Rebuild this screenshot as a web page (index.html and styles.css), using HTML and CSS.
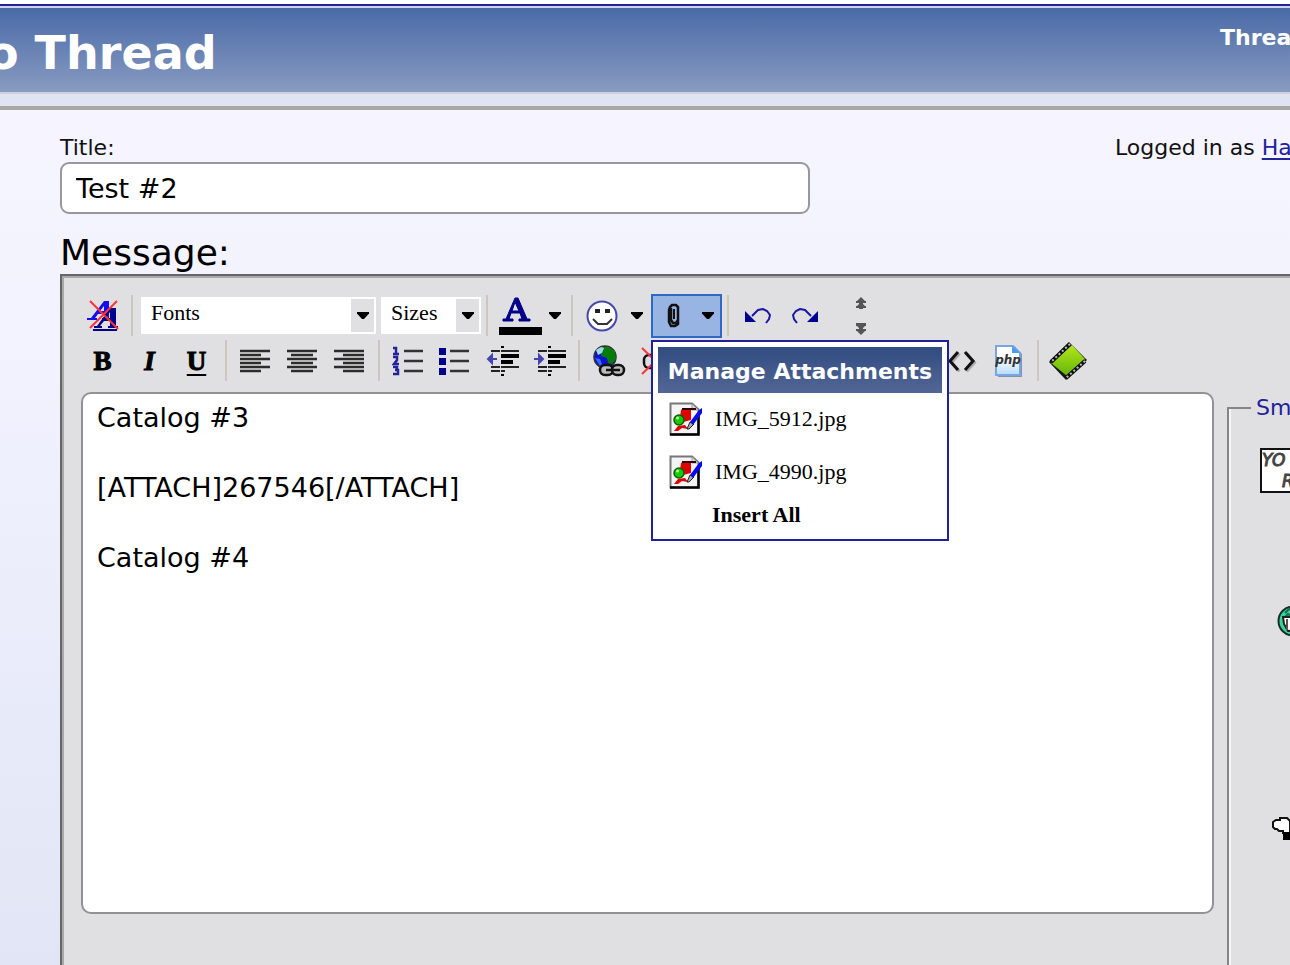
FILE: index.html
```html
<!DOCTYPE html>
<html lang="en">
<head>
<meta charset="utf-8">
<title>Thread</title>
<link rel="stylesheet" href="styles.css">
</head>
<body>
<svg class="defs" aria-hidden="true">
  <symbol id="caret" viewBox="0 0 12 7"><path d="M0 0h12v1.500L7 7H5L0 1.500z"/></symbol>
  <symbol id="picture" viewBox="0 0 34 34">
    <path d="M1.500 1.500H23l6.500 6v25h-28z" fill="#f4f4f4" stroke="#777" stroke-width="2"/>
    <path d="M1 32.500h28.500V12" fill="none" stroke="#000" stroke-width="2.500"/>
    <path d="M23 2v6h6" fill="#ddd" stroke="#999"/>
    <path d="M12 8l3-2h7v12l-8 2-3-5z" fill="#e00000"/><path d="M13 7h14" stroke="#300" stroke-width="2"/>
    <path d="M5 29l4-5 7-1 3 4-6-1-4 3z" fill="#e00000"/>
    <circle cx="10" cy="18" r="5" fill="#18c800" stroke="#056000" stroke-width="1.500"/><circle cx="8.500" cy="16" r="1.500" fill="#bff7a0"/>
    <path d="M18 27l3-7 4 2-5 5z" fill="#aaa" stroke="#222"/><path d="M21 20L30 8l3-2v5l-9 12z" fill="#0808f0"/>
  </symbol>
</svg>

<header class="banner">
  <h1>o Thread</h1>
  <span class="banner-tools">Threa</span>
</header>
<div class="strip"></div>

<main class="page">
  <div class="title-row">
    <div class="title-field">
      <label for="title">Title:</label>
      <input id="title" type="text" value="Test #2">
    </div>
    <p class="login">Logged in as <a href="#">Ha</a></p>
  </div>
  <label class="message-label" for="message">Message:</label>

  <section class="editor">
    <div class="toolbar">
      <div class="tools">
        <button class="tool" aria-label="Remove formatting"><svg width="34" height="32" viewBox="0 0 34 32"><path d="M1 18h4L18 1h5v17h2v2H16v-2h2v-4h-6l-3 4h2v2H1zm13-7h4V6z" fill="#1010f0"/><path d="M8 26h3L24 8h6v18h2v2H22v-2h2v-5h-6l-4 5h2v2H8zm12-8h4v-6zM7 29h24v2H7z" fill="#00008c"/><path d="M4 1l28 28M31 1L4 28" stroke="#f33" stroke-width="2"/></svg></button>
        <span class="sep"></span>
        <span class="picker fonts"><select aria-label="Fonts"><option>Fonts</option></select><span class="arrow"><svg class="caret"><use href="#caret"/></svg></span></span>
        <span class="picker sizes"><select aria-label="Sizes"><option>Sizes</option></select><span class="arrow"><svg class="caret"><use href="#caret"/></svg></span></span>
        <span class="sep"></span>
        <button class="tool menu" aria-label="Text colour"><svg width="44" height="38" viewBox="0 0 44 38"><path d="M5 22h3L17 1h3l9 21h3v2H21v-2h3l-2-6h-9l-2 6h4v2H5zm9-8h7l-4-9z" fill="#00008b" stroke="#00008b"/><path d="M1 30h43v8H1z"/></svg><svg class="caret"><use href="#caret"/></svg></button>
        <span class="sep"></span>
        <button class="tool menu smile" aria-label="Smilies"><svg width="32" height="32" viewBox="0 0 32 32"><circle cx="16" cy="16" r="14.500" fill="#fff" stroke="#4646ac" stroke-width="2"/><path d="M9 9h5v4H9zM19 9h5v4h-5z" fill="#222"/><path d="M7 19l5 5h9l5-5" fill="none" stroke="#333" stroke-width="2"/></svg><svg class="caret"><use href="#caret"/></svg></button>
        <div class="attach">
          <button class="tool menu open" aria-label="Attachments" aria-expanded="true"><svg width="34" height="26" viewBox="0 0 34 26"><path d="M12 5v12l2 3h3l2-3V4l-2-2h-4l-2 2-1 3v12l2 4h4l3-2V7" fill="none" stroke="#111" stroke-width="2.500"/><path d="M15 6v10" stroke="#111" stroke-width="2"/></svg><svg class="caret"><use href="#caret"/></svg></button>
          <div class="popup">
            <h2>Manage Attachments</h2>
            <button class="item"><svg width="34" height="34"><use href="#picture"/></svg>IMG_5912.jpg</button>
            <button class="item"><svg width="34" height="34"><use href="#picture"/></svg>IMG_4990.jpg</button>
            <button class="item all">Insert All</button>
          </div>
        </div>
        <span class="sep"></span>
        <button class="tool" aria-label="Undo"><svg width="26" height="16" viewBox="0 0 26 16"><path d="M0 3l11 11H0z" fill="#000090"/><path d="M7 8l6-6 5-1 4 2 3 4-1 4-3 4" fill="none" stroke="#1818a0" stroke-width="2"/></svg></button>
        <button class="tool" aria-label="Redo"><svg width="26" height="16" viewBox="0 0 26 16"><path d="M26 3L15 14h11z" fill="#000090"/><path d="M19 8l-6-6-5-1-4 2-3 4 1 4 3 4" fill="none" stroke="#1818a0" stroke-width="2"/></svg></button>
        <span class="resize">
          <button aria-label="Decrease size"><svg width="12" height="13" viewBox="0 0 12 13"><path d="M6 0l5 5H8v2l3 3H8v2H4v-2H1l3-3V5H1zM1 4h10v2H1zM1 9h10v2H1z" fill="#555"/></svg></button>
          <button aria-label="Increase size"><svg width="12" height="13" viewBox="0 0 12 13"><path d="M6 13l5-5H8V6l3-3H8V1H4v2H1l3 3v2H1zM1 9h10V7H1zM1 4h10V1H1z" fill="#555"/></svg></button>
        </span>
      </div>
      <div class="tools">
        <button class="tool letter" aria-label="Bold">B</button>
        <button class="tool letter slant" aria-label="Italic">I</button>
        <button class="tool letter line" aria-label="Underline">U</button>
        <span class="sep"></span>
        <button class="tool" aria-label="Align left"><svg width="32" height="24" viewBox="0 0 32 24"><path d="M0 2h30M0 6h21M0 10h30M0 14h21M0 18h30M0 22h21" stroke="#2c2c2c" stroke-width="2.500"/></svg></button>
        <button class="tool" aria-label="Align centre"><svg width="32" height="24" viewBox="0 0 32 24"><path d="M0 2h30M4 6h22M0 10h30M4 14h22M0 18h30M4 22h22" stroke="#2c2c2c" stroke-width="2.500"/></svg></button>
        <button class="tool" aria-label="Align right"><svg width="32" height="24" viewBox="0 0 32 24"><path d="M0 2h30M9 6h21M0 10h30M9 14h21M0 18h30M9 22h21" stroke="#2c2c2c" stroke-width="2.500"/></svg></button>
        <span class="sep"></span>
        <button class="tool" aria-label="Numbered list"><svg width="34" height="30" viewBox="0 0 34 30"><path d="M12 5h19M12 15h19M12 25h19" stroke="#333" stroke-width="2.500"/><path d="M1 2h3v6M1 8h6M1 11h4v3l-3 4h5M1 21h4v3H3h3v4H1" fill="none" stroke="#22229a" stroke-width="2.500"/></svg></button>
        <button class="tool" aria-label="Bulleted list"><svg width="34" height="28" viewBox="0 0 34 28"><path d="M11 4h19M11 14h19M11 24h19" stroke="#333" stroke-width="2.500"/><path d="M0 1h7v7H0zM0 11h7v7H0zM0 21h7v7H0z" fill="#00008b"/></svg></button>
        <button class="tool" aria-label="Outdent"><svg width="34" height="32" viewBox="0 0 34 32"><path d="M5 6h9M15 6h18M5 22h9M15 22h18M5 26h9M15 26h4" stroke="#222" stroke-width="2"/><path d="M15 9h18v4H15zM15 15h12v4H15zM15 1h3v2h-3zM15 29h3v2h-3z"/><path d="M11 14H3M6 10l-4 4 4 4z" fill="#4444b0" stroke="#4444b0" stroke-width="2"/></svg></button>
        <button class="tool" aria-label="Indent"><svg width="34" height="32" viewBox="0 0 34 32"><path d="M5 6h9M15 6h18M5 22h9M15 22h18M5 26h9M15 26h4" stroke="#222" stroke-width="2"/><path d="M15 9h18v4H15zM15 15h12v4H15zM15 1h3v2h-3zM15 29h3v2h-3z"/><path d="M1 14h6M6 10l4 4-4 4z" fill="#4444b0" stroke="#4444b0" stroke-width="2"/></svg></button>
        <span class="sep"></span>
        <button class="tool" aria-label="Insert link"><svg width="34" height="34" viewBox="0 0 34 34"><circle cx="13" cy="13" r="11" fill="#0a14d0" stroke="#333" stroke-width="1.500"/><path d="M9 3h8l6 4 1 8-4 5-4-1-1-5-6-2 1-4z" fill="#087c08"/><path d="M4 6l5-3 3 1-2 5-4 2z" fill="#9fd8e8"/><path d="M3 14l5 1 2 5-2 2z" fill="#3b66ff"/><g fill="#bbb" stroke="#111" stroke-width="2.500"><rect x="8" y="21" width="13" height="10" rx="5"/><rect x="20" y="21" width="12" height="10" rx="5"/><path d="M14 26h14"/></g></svg></button>
        <button class="tool" aria-label="Remove link"><svg width="34" height="30" viewBox="0 0 34 30"><rect x="5" y="9" width="12" height="13" rx="5" fill="#ddd" stroke="#111" stroke-width="2.500"/><path d="M3 2l27 26M30 2L3 28" stroke="#f33" stroke-width="2"/></svg></button>
        <span class="covered"></span>
        <button class="tool" aria-label="HTML"><svg width="30" height="22" viewBox="0 0 30 22"><path d="M11 2L3 11l8 9M18 2l8 9-8 9" transform="translate(1.500 1.500)" fill="none" stroke="#aaa" stroke-width="3"/><path d="M11 2L3 11l8 9M18 2l8 9-8 9" fill="none" stroke="#111" stroke-width="3"/></svg></button>
        <button class="tool" aria-label="PHP"><svg width="30" height="34" viewBox="0 0 30 34"><defs><linearGradient id="sheet" x2="0" y2="1"><stop offset=".4" stop-color="#fff"/><stop offset="1" stop-color="#b4dcff"/></linearGradient></defs><path d="M4 3h17l7 7v23H4z" fill="#8293ad"/><path d="M2 2h17l7 7v22H2z" fill="url(#sheet)" stroke="#79a5e0" stroke-width="2"/><path d="M18 2v7h8z" fill="#499bf4"/><text x="14" y="20" text-anchor="middle" class="php">php</text></svg></button>
        <span class="sep"></span>
        <button class="tool" aria-label="Video"><svg width="40" height="40" viewBox="0 0 40 40"><defs><linearGradient id="film" x2="0" y2="1"><stop stop-color="#b5e61d"/><stop offset="1" stop-color="#62b509"/></linearGradient></defs><path d="M21 1l18 18-21 20L1 21z" fill="#171717"/><path d="M24 4l13 14-18 17L3 22z" fill="url(#film)"/><path d="M22 3L3 21M37 20L18 37" stroke="#111" stroke-width="4"/><path d="M22 3L3 21M37 20L18 37" stroke="#bbb" stroke-width="2" stroke-dasharray="2 2.500"/></svg></button>
      </div>
    </div>
    <div class="body-row">
      <textarea id="message">Catalog #3

[ATTACH]267546[/ATTACH]

Catalog #4</textarea>
      <fieldset class="smilies">
        <legend>Sm</legend>
        <div class="smilie-list">
          <span class="sign"><span>YO</span><span class="second">R</span></span>
          <svg class="grin" width="32" height="32" viewBox="0 0 32 32"><circle cx="16" cy="16" r="14.500" fill="#35d69b" stroke="#1d2b27" stroke-width="2"/><path d="M8 8l4-4h4M8 12l3-3 4 3" fill="none" stroke="#176d50" stroke-width="2"/><path d="M6 12h20v6l-5 8H11l-4-7z" fill="#fff" stroke="#222" stroke-width="2"/><path d="M10 14v11M15 14v12" stroke="#555" stroke-width="2"/></svg>
          <svg class="thumb" width="32" height="26" viewBox="0 0 32 26"><path d="M8 1h7l3 3v12h-7v-2H7l-2-2H3L1 10V5l3-2h4z" fill="#fff" stroke="#111" stroke-width="2"/><path d="M11 15h7v8h-7z"/></svg>
        </div>
      </fieldset>
    </div>
  </section>
</main>
</body>
</html>
```
FILE: styles.css
```css
* { box-sizing: border-box; }

body {
  margin: 0;
  height: 100vh;
  padding-top: 4px;
  display: flex;
  flex-direction: column;
  overflow: hidden;
  background: #fff;
  color: #111;
  font: 22px/26px Verdana, "DejaVu Sans", sans-serif;
}

button {
  margin: 0;
  padding: 0;
  border: 0;
  background: none;
  color: #000;
  font: inherit;
}

.defs { position: absolute; width: 0; height: 0; }

.banner {
  flex: none;
  display: flex;
  justify-content: space-between;
  height: 90px;
  overflow: hidden;
  border-top: 2px solid #22229c;
  border-bottom: 2px solid #d1d1e1;
  box-shadow: inset 0 2px #cfd3e8;
  background: linear-gradient(#4869a6, #889bc1);
  color: #fff;
  font-weight: bold;
  white-space: nowrap;
}

.banner h1 {
  margin: 18px 0 0 -13px;
  font-size: 46px;
  line-height: 58px;
}

.banner-tools { width: 70px; padding-top: 19px; }

.strip {
  flex: none;
  height: 16px;
  border-bottom: 4px solid #a8a8a8;
  background: #e0e3f1;
}

.page {
  flex: 1;
  min-height: 0;
  display: flex;
  flex-direction: column;
  padding: 25px 0 0 60px;
  background: linear-gradient(#f6f5ff, #f1f2fe 30%, #e1e5f5);
}

.title-row { display: flex; justify-content: space-between; }

.title-field {
  flex: 0 1 750px;
  display: flex;
  flex-direction: column;
  gap: 1px;
}

.title-field input {
  height: 52px;
  padding: 0 14px;
  border: 2px solid #98989c;
  border-radius: 9px;
  background: #fff;
  color: #000;
  font: 27px/34px Verdana, "DejaVu Sans", sans-serif;
}

.login { width: 175px; margin: 0; white-space: nowrap; }
.login a { color: #22229c; text-underline-offset: 3px; }

.message-label {
  padding-top: 18px;
  color: #000;
  font-size: 36px;
  line-height: 42px;
}

.editor {
  flex: 1;
  min-height: 0;
  display: flex;
  flex-direction: column;
  padding: 17px 0 0 17px;
  border: solid #666;
  border-width: 2px 0 0 2px;
  box-shadow: inset 2px 2px #a9a9ab;
  background: #e0e0e2;
}

.tools { display: flex; align-items: center; height: 45px; }

.tool {
  flex: none;
  display: flex;
  align-items: center;
  justify-content: center;
  width: 47px;
  height: 44px;
}

.menu { width: 73px; gap: 7px; }
.smile { gap: 13px; }

.sep {
  flex: none;
  width: 12px;
  height: 41px;
  background: linear-gradient(#cbc7bd, #cbc7bd) center / 2px 100% no-repeat;
}

.caret { width: 12px; height: 7px; }

.picker {
  position: relative;
  flex: none;
  height: 37px;
}

.fonts { width: 235px; margin-left: 3px; }
.sizes { width: 100px; margin-left: 5px; }

.picker select {
  appearance: none;
  width: 100%;
  height: 100%;
  padding: 0 10px 6px;
  border: 0;
  border-radius: 0;
  background: #fff;
  color: #000;
  font: 22px/26px "Liberation Serif", serif;
}

.picker .arrow {
  position: absolute;
  top: 2px;
  right: 2px;
  bottom: 2px;
  width: 23px;
  display: flex;
  align-items: center;
  justify-content: center;
  background: #e0e0e2;
  pointer-events: none;
}

.attach { position: relative; }

.open {
  width: 71px;
  gap: 9px;
  border: 2px solid #3069c4;
  background: #98b4e2;
}

.popup {
  position: absolute;
  top: 46px;
  left: 0;
  z-index: 1;
  width: 298px;
  padding: 5px 5px 8px;
  border: 2px solid #20209a;
  background: #fff;
}

.popup h2 {
  margin: 0;
  padding: 12px 0 8px;
  background: linear-gradient(#314c80, #526696);
  color: #fff;
  font-size: 22px;
  line-height: 26px;
  text-align: center;
  white-space: nowrap;
}

.popup .item {
  display: flex;
  align-items: center;
  gap: 12px;
  width: 100%;
  height: 53px;
  padding-left: 11px;
  font: 22px/30px "Liberation Serif", serif;
}

.popup .all {
  height: 32px;
  padding-left: 54px;
  font-weight: bold;
}

.resize {
  display: flex;
  flex-direction: column;
  align-items: center;
  gap: 12px;
  width: 66px;
}

.resize button, .resize svg { display: block; }

.letter {
  font: bold 27px/32px "Liberation Serif", serif;
  -webkit-text-stroke: 1px #000;
}

.slant { font-style: italic; }

.line { text-decoration: underline 2px; text-underline-offset: 4px; }

.covered { flex: 0 0 259px; }

.php { font: italic bold 12px "DejaVu Sans", sans-serif; fill: #333; }

.body-row {
  flex: 1;
  min-height: 0;
  display: flex;
  gap: 13px;
  padding: 9px 0 0 2px;
}

textarea {
  flex: 1;
  height: 522px;
  padding: 6px 14px;
  border: 2px solid #929295;
  border-radius: 10px;
  background: #fff;
  color: #000;
  font: 27px/35px Verdana, "DejaVu Sans", sans-serif;
  resize: none;
}

.smilies {
  flex: 0 0 63px;
  min-width: 0;
  margin: 3px 0 0;
  padding: 0;
  border: solid #858585;
  border-width: 2px 0 0 2px;
  box-shadow: inset 2px 0 #f6f6f6;
}

.smilies legend {
  margin-left: 22px;
  padding: 0 0 0 5px;
  color: #22229c;
}

.smilie-list {
  display: flex;
  flex-direction: column;
  padding: 27px 0 0 31px;
  overflow: hidden;
}

.sign {
  display: flex;
  flex-direction: column;
  height: 45px;
  border: 2px solid #111;
  border-right: 0;
  background: #fff;
  color: #444;
  font: italic 17px/21px "DejaVu Sans", sans-serif;
  white-space: nowrap;
  -webkit-text-stroke: 1px #444;
}

.second { padding-left: 20px; }

.grin { margin: 112px 0 0 17px; }
.thumb { margin: 180px 0 0 12px; }
```
